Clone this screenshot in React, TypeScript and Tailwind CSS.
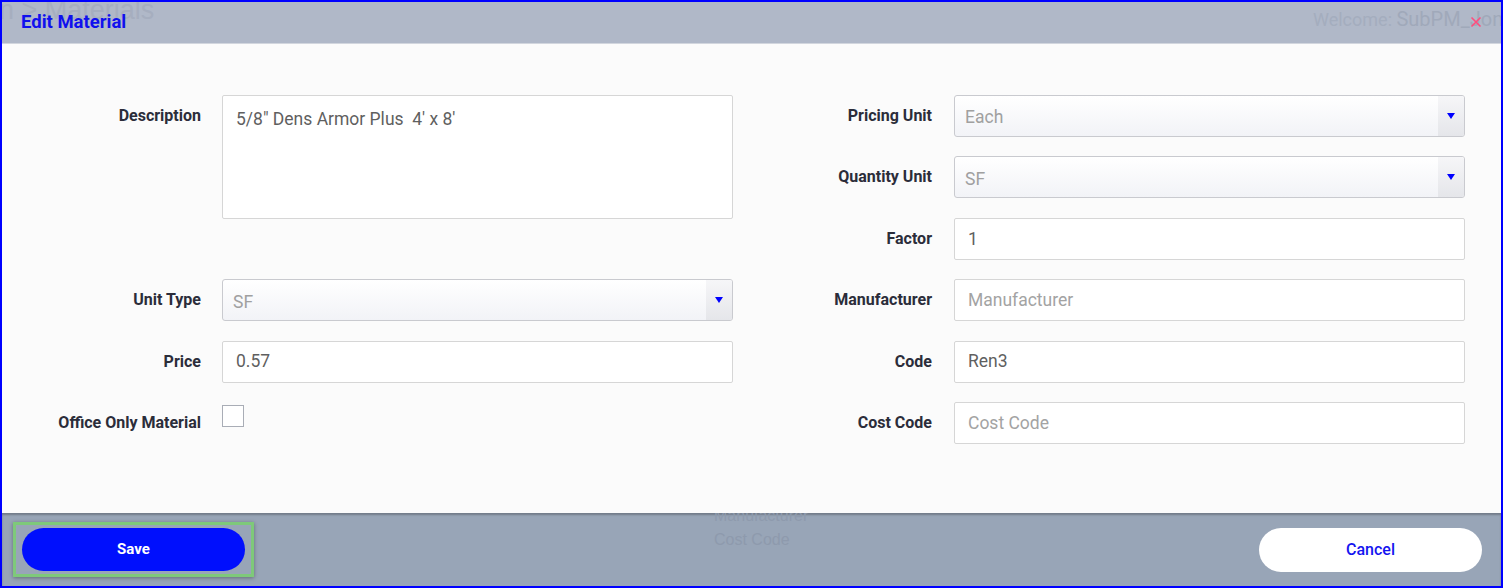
import React from "react";

const font = { fontFamily: "Roboto, 'Noto Sans', sans-serif" };

function Label({ children, pr = "pr-[21px]" }: { children: React.ReactNode; pr?: string }) {
  return (
    <div className={`h-[42px] flex items-center justify-end ${pr} text-[16px] font-bold text-[#2b2d3a] whitespace-nowrap`}>
      {children}
    </div>
  );
}

function TextInput({ value, placeholder }: { value?: string; placeholder?: string }) {
  return (
    <div className="h-[42px] w-[511px] bg-white border border-[#d6d6d6] rounded-[2px] flex items-center pl-[13px] text-[17.5px]">
      {value ? (
        <span className="text-[#5f5f5f]">{value}</span>
      ) : (
        <span className="text-[#a3a3a3]">{placeholder}</span>
      )}
    </div>
  );
}

function Select({ value }: { value: string }) {
  return (
    <div className="h-[42px] w-[511px] border border-[#c9cacf] rounded-[3px] flex bg-gradient-to-b from-white to-[#f2f3f7] overflow-hidden">
      <div className="flex-1 flex items-center pl-[10px] pt-[3px] text-[17.5px] text-[#a0a0a0]">{value}</div>
      <div className="w-[26px] flex items-center justify-center bg-gradient-to-b from-[#f6f6f8] to-[#e5e6ea]">
        <svg width="8" height="6" viewBox="0 0 8 6">
          <path d="M0 0 H8 L4 6 Z" fill="#0000ff" />
        </svg>
      </div>
    </div>
  );
}

export default function App() {
  return (
    <div
      className="w-[1503px] h-[588px] border-2 border-[#0000ff] flex flex-col overflow-hidden bg-[#fbfbfb]"
      style={font}
    >
      {/* Header */}
      <div className="relative h-[42px] shrink-0 bg-[#b0b8c8] border-b border-[#d2d6de] flex items-center pl-[19px] overflow-hidden">
        <span
          className="absolute left-[-3px] top-[-5px] text-[27px] text-[#a6aebf] leading-none whitespace-nowrap"
          style={{ fontFamily: "'Liberation Sans', sans-serif" }}
        >
          n &gt; Materials
        </span>
        <span className="absolute left-[1311px] top-[2px] text-[18px] text-[#a4adbe] whitespace-nowrap">
          Welcome: <span className="text-[20px] text-[#a0a9ba]">SubPM_Jon</span>
        </span>
        <span className="relative text-[18.5px] font-bold text-[#1010ee]">Edit Material</span>
        <svg className="absolute left-[1468px] top-[14px]" width="12" height="12" viewBox="0 0 12 12">
          <path d="M1.5 1.5 L10.5 10.5 M10.5 1.5 L1.5 10.5" stroke="#ff4d7d" strokeWidth="1.6" />
        </svg>
      </div>

      {/* Body */}
      <div className="flex-1 pt-[51px]">
        <div className="grid grid-cols-[220px_511px_221px_511px] grid-rows-[42px_42px_42px_42px_42px_42px] gap-y-[19.4px]">
          <div className="col-start-1 row-start-1">
            <Label>Description</Label>
          </div>
          <div className="col-start-2 row-start-1 row-span-3 self-start h-[124px] bg-white border border-[#d6d6d6] rounded-[2px] pl-[13px] pt-[10px] text-[17.5px] text-[#5f5f5f] whitespace-pre">
            {"5/8\" Dens Armor Plus  4' x 8'"}
          </div>

          <div className="col-start-1 row-start-4"><Label>Unit Type</Label></div>
          <div className="col-start-2 row-start-4"><Select value="SF" /></div>

          <div className="col-start-1 row-start-5"><Label>Price</Label></div>
          <div className="col-start-2 row-start-5"><TextInput value="0.57" /></div>

          <div className="col-start-1 row-start-6"><Label>Office Only Material</Label></div>
          <div className="col-start-2 row-start-6 pt-[3px]">
            <div className="w-[22px] h-[22px] bg-white border border-[#a9adb6]" />
          </div>

          <div className="col-start-3 row-start-1"><Label pr="pr-[22px]">Pricing Unit</Label></div>
          <div className="col-start-4 row-start-1"><Select value="Each" /></div>

          <div className="col-start-3 row-start-2"><Label pr="pr-[22px]">Quantity Unit</Label></div>
          <div className="col-start-4 row-start-2"><Select value="SF" /></div>

          <div className="col-start-3 row-start-3"><Label pr="pr-[22px]">Factor</Label></div>
          <div className="col-start-4 row-start-3"><TextInput value="1" /></div>

          <div className="col-start-3 row-start-4"><Label pr="pr-[22px]">Manufacturer</Label></div>
          <div className="col-start-4 row-start-4"><TextInput placeholder="Manufacturer" /></div>

          <div className="col-start-3 row-start-5"><Label pr="pr-[22px]">Code</Label></div>
          <div className="col-start-4 row-start-5"><TextInput value="Ren3" /></div>

          <div className="col-start-3 row-start-6"><Label pr="pr-[22px]">Cost Code</Label></div>
          <div className="col-start-4 row-start-6"><TextInput placeholder="Cost Code" /></div>
        </div>
      </div>

      {/* Footer */}
      <div className="relative h-[73px] shrink-0 bg-[#98a5b7] shadow-[inset_0_2px_2px_rgba(0,0,0,0.25)] flex items-center justify-between pl-[11px] pr-[19px] overflow-hidden">
        <div
          className="absolute left-[712px] top-[-8px] text-[16px] leading-[22px] text-[#8e9aad]"
          style={{ fontFamily: "'Liberation Sans', sans-serif" }}
        >
          <div>Manufacturer</div>
          <div className="mt-[2px]">Cost Code</div>
        </div>
        <div className="relative border-[3px] border-[#7ec97a] px-[6px] py-[3px] shadow-[0_1px_4px_rgba(0,0,0,0.35)]">
          <button className="w-[223px] h-[43px] rounded-full bg-[#000ffd] text-white text-[15px] font-bold">
            Save
          </button>
        </div>
        <button className="relative w-[223px] h-[44px] rounded-full bg-white text-[#1414f0] text-[16px] font-medium">
          Cancel
        </button>
      </div>
    </div>
  );
}
